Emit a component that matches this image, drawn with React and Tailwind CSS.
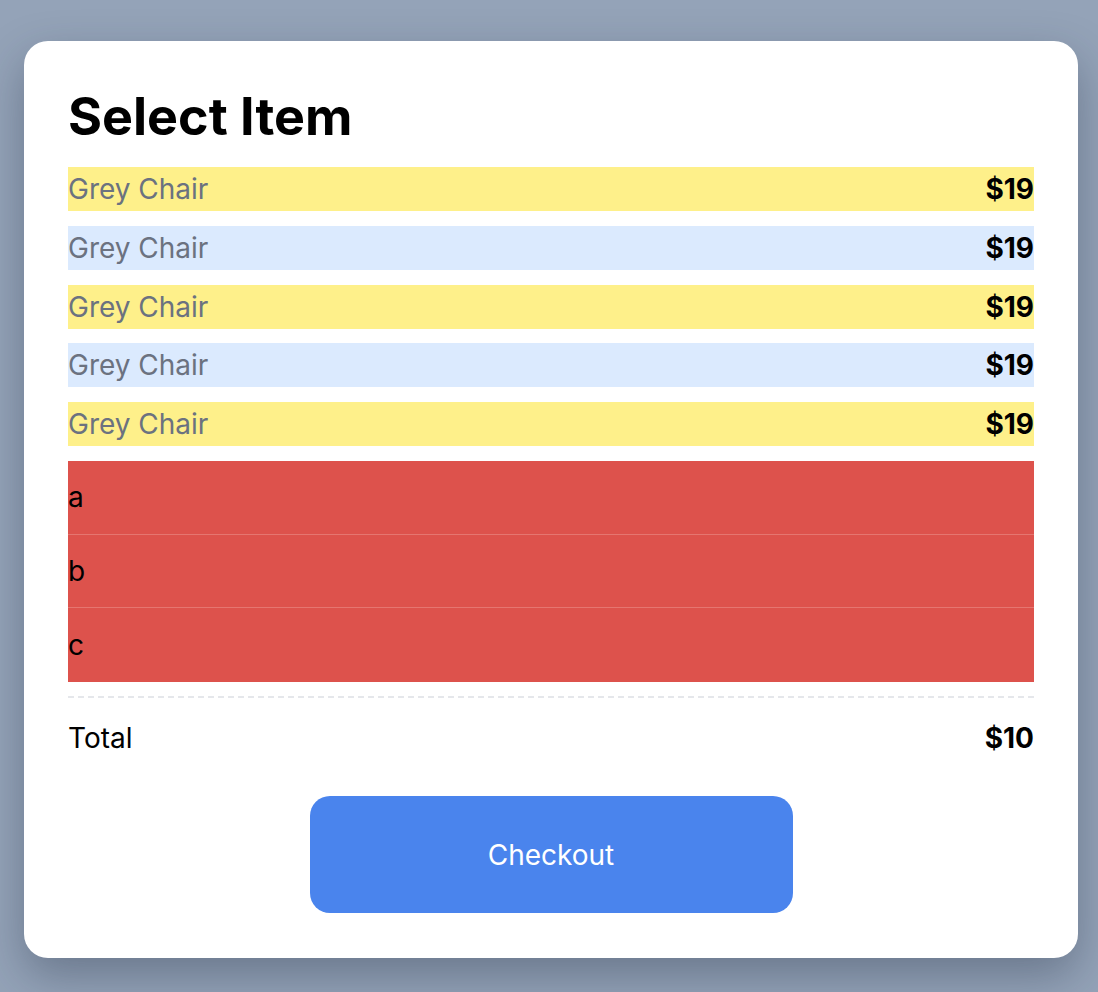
import React from "react";

const items = [
  { name: "Grey Chair", price: "$19", bg: "bg-[#fef08a]" },
  { name: "Grey Chair", price: "$19", bg: "bg-[#dbeafe]" },
  { name: "Grey Chair", price: "$19", bg: "bg-[#fef08a]" },
  { name: "Grey Chair", price: "$19", bg: "bg-[#dbeafe]" },
  { name: "Grey Chair", price: "$19", bg: "bg-[#fef08a]" },
];

const extras = ["a", "b", "c"];

export default function App() {
  return (
    <div className="min-h-screen bg-[#94a3b8] pl-6 pr-5 pt-[41px] pb-8 font-['Inter',sans-serif]">
      <div className="rounded-[24px] bg-white px-11 pt-[50px] pb-[45px] shadow-[0_18px_45px_rgba(30,41,59,0.35)]">
        <h1 className="text-[52px] font-bold leading-none text-black">Select Item</h1>

        <div className="mt-[24px] flex flex-col gap-[14.75px]">
          {items.map((item, i) => (
            <div key={i} className={`flex h-[44px] items-center justify-between ${item.bg}`}>
              <span className="text-[28px] text-[#6b7280]">{item.name}</span>
              <span className="text-[28px] font-bold text-black">{item.price}</span>
            </div>
          ))}

          <div className="flex flex-col divide-y divide-[#e57670] bg-[#dd524c]">
            {extras.map((x) => (
              <div key={x} className="flex h-[73.8px] items-center text-[28px] text-black">
                {x}
              </div>
            ))}
          </div>
        </div>

        <div className="mt-[14px] flex items-center justify-between border-t-2 border-dashed border-[#e5e7eb] pt-[24px] leading-8">
          <span className="text-[28px] text-black">Total</span>
          <span className="text-[28px] font-bold text-black">$10</span>
        </div>

        <button className="mx-auto mt-[42px] flex h-[117px] w-1/2 items-center justify-center rounded-[20px] bg-[#4a84ed] text-[28px] text-white">
          Checkout
        </button>
      </div>
    </div>
  );
}
